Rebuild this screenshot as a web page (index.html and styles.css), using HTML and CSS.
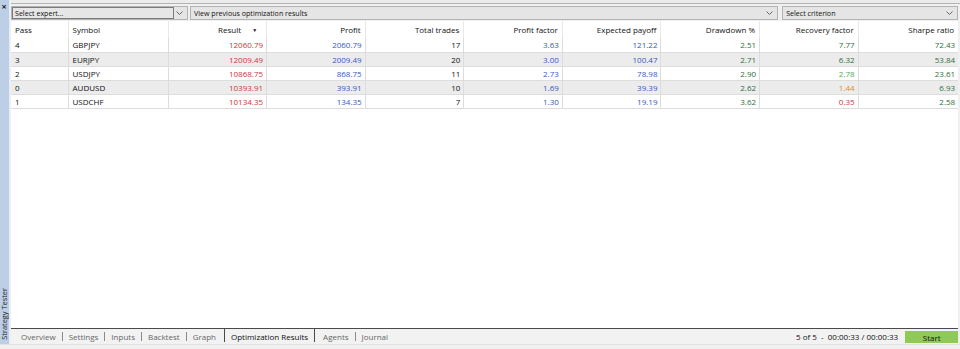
FILE: index.html
```html
<!DOCTYPE html>
<html>
<head>
<meta charset="utf-8">
<link rel="stylesheet" href="styles.css">
</head>
<body>
<div class="app">
  <div class="side">
    <span class="close">×</span>
    <span class="side-title">Strategy Tester</span>
  </div>
  <div class="main">
    <div class="topline"></div>
    <div class="toolbar">
      <div class="combo combo-expert">
        <div class="field">Select expert...</div>
        <svg class="chev" width="7" height="4" viewBox="0 0 7 4"><path d="M0.5 0.5 L3.5 3.5 L6.5 0.5" fill="none" stroke="#666" stroke-width="1"/></svg>
      </div>
      <div class="combo combo-view">
        <span class="ctext">View previous optimization results</span>
        <svg class="chev" width="7" height="4" viewBox="0 0 7 4"><path d="M0.5 0.5 L3.5 3.5 L6.5 0.5" fill="none" stroke="#666" stroke-width="1"/></svg>
      </div>
      <div class="combo combo-crit">
        <span class="ctext">Select criterion</span>
        <svg class="chev" width="7" height="4" viewBox="0 0 7 4"><path d="M0.5 0.5 L3.5 3.5 L6.5 0.5" fill="none" stroke="#666" stroke-width="1"/></svg>
      </div>
    </div>
    <div class="grid">
      <table class="results">
        <colgroup>
          <col class="c-pass"><col class="c-sym"><col class="c-n"><col class="c-n"><col class="c-n"><col class="c-n"><col class="c-n"><col class="c-n"><col class="c-n"><col class="c-last">
        </colgroup>
        <thead>
          <tr>
            <th class="l">Pass</th>
            <th class="l">Symbol</th>
            <th class="sorted">Result <span class="sort">▼</span></th>
            <th>Profit</th>
            <th>Total trades</th>
            <th>Profit factor</th>
            <th>Expected payoff</th>
            <th>Drawdown %</th>
            <th>Recovery factor</th>
            <th>Sharpe ratio</th>
          </tr>
        </thead>
        <tbody>
          <tr>
            <td class="l">4</td><td class="l">GBPJPY</td><td class="red">12060.79</td><td class="blue">2060.79</td><td>17</td><td class="blue">3.63</td><td class="blue">121.22</td><td class="green">2.51</td><td class="green">7.77</td><td class="green">72.43</td>
          </tr>
          <tr class="alt">
            <td class="l">3</td><td class="l">EURJPY</td><td class="red">12009.49</td><td class="blue">2009.49</td><td>20</td><td class="blue">3.00</td><td class="blue">100.47</td><td class="green">2.71</td><td class="green">6.32</td><td class="green">53.84</td>
          </tr>
          <tr>
            <td class="l">2</td><td class="l">USDJPY</td><td class="red">10868.75</td><td class="blue">868.75</td><td>11</td><td class="blue">2.73</td><td class="blue">78.98</td><td class="green">2.90</td><td class="lgreen">2.78</td><td class="green">23.61</td>
          </tr>
          <tr class="alt">
            <td class="l">0</td><td class="l">AUDUSD</td><td class="red">10393.91</td><td class="blue">393.91</td><td>10</td><td class="blue">1.69</td><td class="blue">39.39</td><td class="green">2.62</td><td class="orange">1.44</td><td class="green">6.93</td>
          </tr>
          <tr>
            <td class="l">1</td><td class="l">USDCHF</td><td class="red">10134.35</td><td class="blue">134.35</td><td>7</td><td class="blue">1.30</td><td class="blue">19.19</td><td class="green">3.62</td><td class="red">0.35</td><td class="green">2.58</td>
          </tr>
        </tbody>
      </table>
    </div>
    <div class="tabbar">
      <div class="tabs">
        <span class="tab">Overview</span><span class="sep"></span>
        <span class="tab">Settings</span><span class="sep"></span>
        <span class="tab">Inputs</span><span class="sep"></span>
        <span class="tab">Backtest</span><span class="sep"></span>
        <span class="tab">Graph</span>
        <span class="tab active">Optimization Results</span>
        <span class="tab">Agents</span><span class="sep"></span>
        <span class="tab">Journal</span>
      </div>
      <div class="status">
        <span class="progress">5 of 5&nbsp; - &nbsp;00:00:33 / 00:00:33</span>
        <button class="start">Start</button>
      </div>
    </div>
    <div class="bottomline"></div>
  </div>
</div>
</body>
</html>
```
FILE: styles.css
```css
* { box-sizing: border-box; }
html, body { margin: 0; padding: 0; }
body {
  width: 960px;
  height: 349px;
  overflow: hidden;
  background: #f0f0f0;
  font-family: "Open Sans", "Noto Sans", "Liberation Sans", sans-serif;
  font-size: 8px;
  color: #111;
}
.app {
  display: flex;
  height: 349px;
}
.side {
  width: 10px;
  height: 344px;
  background: #bccfe6;
  border-right: 1px solid #e4ecf6;
  display: flex;
  flex-direction: column;
  justify-content: space-between;
  align-items: center;
  padding: 3px 0 4px 0;
}
.close {
  font-size: 9px;
  line-height: 7px;
  font-weight: bold;
  color: #222;
  margin-left: -1px;
}
.side-title {
  writing-mode: vertical-rl;
  transform: rotate(180deg);
  font-size: 7.4px;
  color: #222;
  line-height: 9px;
}
.main {
  flex: 1;
  display: flex;
  flex-direction: column;
  padding-left: 1px;
  padding-right: 2px;
}
.topline {
  height: 4px;
  background: #ececec;
  border-bottom: 1px solid #b4b4b4;
  margin-right: -2px;
}
.toolbar {
  height: 17px;
  display: flex;
  align-items: center;
  gap: 3px;
  font-size: 7.1px;
}
.combo {
  height: 14px;
  border: 1px solid #b3b3b3;
  background: #e5e5e5;
  display: flex;
  align-items: center;
  justify-content: space-between;
  padding-right: 4px;
}
.combo-expert { width: 177px; padding-left: 0; }
.combo-view { flex: 1; padding-left: 3px; margin-left: -1px; }
.combo-crit { width: 176px; padding-left: 3px; margin-left: 1px; }
.field {
  width: 162px;
  height: 12px;
  border: 1px solid #7c7c7c;
  background: #e6e6e6;
  padding-left: 2px;
  line-height: 10px;
  color: #111;
}
.ctext { line-height: 12px; }
.chev { display: block; }
.grid {
  flex: 1;
  background: #fff;
}
.results {
  border-collapse: collapse;
  table-layout: fixed;
  width: 947px;
}
.c-pass { width: 57px; }
.c-sym { width: 100px; }
.c-n { width: 98.6px; }
.c-last { width: 100px; }
.results th {
  height: 17px;
  font-weight: normal;
  text-align: right;
  padding: 0 4px 0 4px;
  border-left: 1px solid #e8e8e8;
  color: #111;
  white-space: nowrap;
}
.results th:first-child { border-left: none; }
.results th.l, .results td.l { text-align: left; padding-left: 4px; }
.results th.sorted { padding-right: 9px; }
.sort {
  font-size: 5px;
  margin-left: 9px;
  vertical-align: 1px;
}
.results td {
  height: 14px;
  padding: 0 3px 0 4px;
  text-align: right;
  border-left: 1px solid #dcdcdc;
  border-bottom: 1px solid #dddddd;
  white-space: nowrap;
}
.results td:first-child { border-left: none; }
.results tr.alt td { background: #ececec; }
.red { color: #d0343a; }
.blue { color: #3459c4; }
.green { color: #2a7038; }
.lgreen { color: #4caa52; }
.orange { color: #e08c28; }
.tabbar {
  height: 16px;
  border-top: 1px solid #4a4a4a;
  display: flex;
  justify-content: space-between;
  align-items: stretch;
  background: #f2f2f2;
}
.tabs {
  display: flex;
  align-items: center;
  padding-left: 9px;
  color: #666;
}
.tab {
  padding: 0 1px;
  line-height: 14px;
}
.sep {
  width: 1px;
  height: 9px;
  background: #8a8a8a;
  margin: 0 5px;
}
.tab.active {
  color: #111;
  border-left: 1px solid #4a4a4a;
  border-right: 1px solid #4a4a4a;
  margin: -1px 7px 0 7px;
  padding: 1px 6px 0 6px;
  height: 14px;
  align-self: flex-start;
  border-top: 1px solid #4a4a4a;
  background: #f2f2f2;
}
.status {
  display: flex;
  align-items: center;
  gap: 7px;
}
.progress { color: #111; }
.start {
  width: 53px;
  height: 12px;
  border: none;
  background: #8fc956;
  font-family: inherit;
  font-size: 8px;
  color: #111;
  padding: 0;
  margin-top: 1px;
}
.bottomline {
  height: 5px;
  border-top: 1px solid #e0e0e0;
  background: #f0f0f0;
  margin-left: -11px;
  margin-right: -2px;
}
```
